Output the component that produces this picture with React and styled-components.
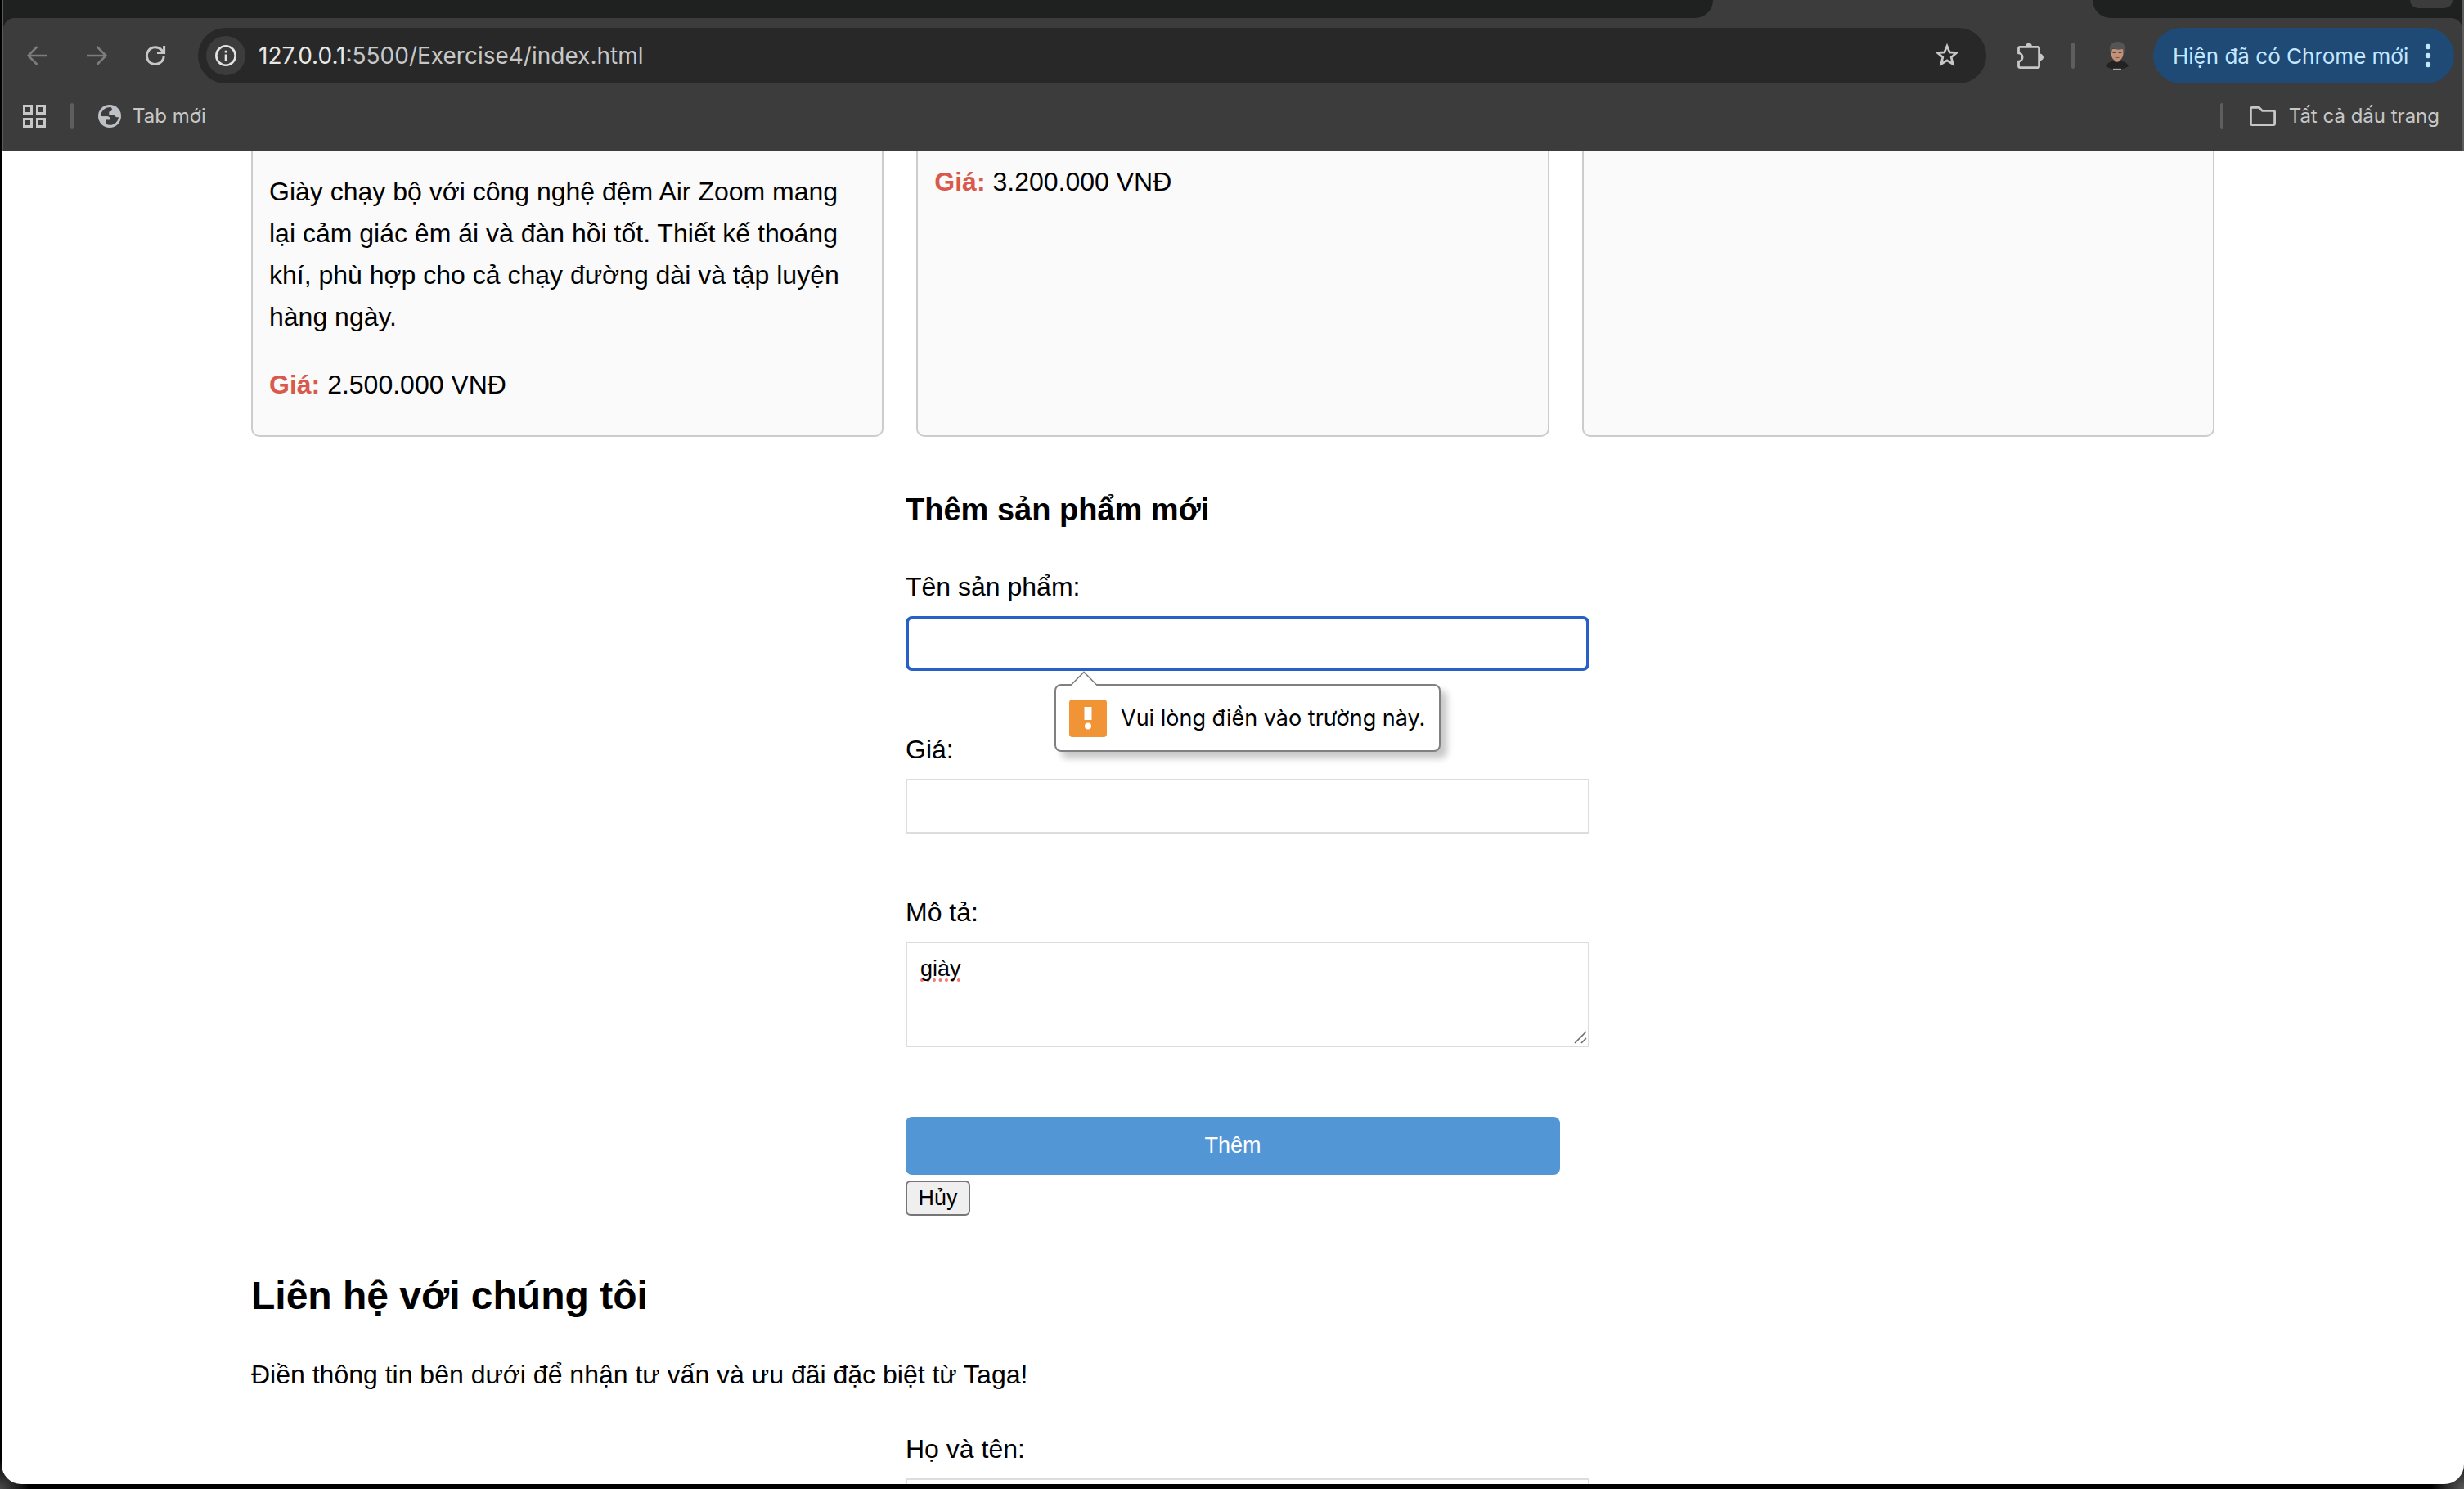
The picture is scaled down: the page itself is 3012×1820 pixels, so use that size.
import React from "react";
import styled, { createGlobalStyle, css } from "styled-components";

const GlobalStyle = createGlobalStyle`
  *, *::before, *::after { box-sizing: border-box; }
  body {
    margin: 0;
    background: #000;
    color: #000;
    font-family: "Liberation Sans", Arial, sans-serif;
  }
  h2, h3, p { margin: 0; }
  svg { display: block; }
`;

const uiFont = css`
  font-family: Inter, Roboto, sans-serif;
`;

/* ---------- Browser window ---------- */

const Window = styled.div`
  display: flex;
  flex-direction: column;
  height: 100vh;
  padding: 0 0 6px 2px;
  overflow: hidden;
  background:
    radial-gradient(circle at 0 100%, #4a4a4a 0, #000 36px) left bottom / 50% 40px no-repeat,
    radial-gradient(circle at 100% 100%, #5a5a5a 0, #000 40px) right bottom / 50% 40px no-repeat,
    #000;
`;

const Chrome = styled.header`
  ${uiFont}
  flex: none;
  background: #3c3c3c;
  border-left: 2px solid #5c5c5c;
  border-right: 2px solid #5c5c5c;
  color: #c7c7c7;
`;

const TabStrip = styled.div`
  display: flex;
  height: 22px;
`;

const StripLeft = styled.div`
  flex: 2090 1 0;
  background: #1f2120;
  border-bottom-right-radius: 22px;
`;

const ActiveTab = styled.div`
  flex: 464 1 0;
`;

const StripRight = styled.div`
  display: flex;
  justify-content: flex-end;
  flex: 452 1 0;
  background: #1f2120;
  border-bottom-left-radius: 22px;
`;

const TabSearch = styled.button`
  width: 52px;
  height: 10px;
  margin: 0 12px 0 0;
  padding: 0;
  border: 0;
  border-radius: 0 0 16px 16px;
  background: #3c3c3c;
`;

const ToolbarWrap = styled.div`
  background: #1f2120;
`;

const Toolbar = styled.div`
  display: flex;
  align-items: center;
  padding: 12px 10px 0 6px;
  border-radius: 14px 14px 0 0;
  background: #3c3c3c;
`;

const IconButton = styled.button`
  display: flex;
  align-items: center;
  justify-content: center;
  width: ${(p) => p.$width || 72}px;
  height: 48px;
  padding: 0;
  border: 0;
  background: none;
  color: ${(p) => (p.$dim ? "#7c7c7c" : "#c7c7c7")};
`;

const Omnibox = styled.div`
  display: flex;
  flex: 1;
  align-items: center;
  height: 68px;
  margin: 0 22px 0 16px;
  padding: 0 16px 0 10px;
  border-radius: 34px;
  background: #282828;
`;

const SiteInfo = styled.button`
  display: flex;
  align-items: center;
  justify-content: center;
  width: 48px;
  height: 48px;
  padding: 0;
  border: 0;
  border-radius: 50%;
  background: #3c3c3c;
  color: #e3e3e3;
`;

const Url = styled.div`
  flex: 1;
  padding-left: 16px;
  font-size: 28px;
  line-height: 36px;
`;

const Host = styled.span`
  color: #e8e8e8;
`;

const Divider = styled.span`
  width: 4px;
  height: 32px;
  border-radius: 2px;
  background: #5e5e5e;
`;

const UpdateButton = styled.button`
  ${uiFont}
  display: flex;
  align-items: center;
  justify-content: space-between;
  width: 368px;
  height: 68px;
  padding: 0 28px 0 24px;
  border: 0;
  border-radius: 34px;
  background: #1f4a75;
  color: #c2e7ff;
  font-size: 26px;
  white-space: nowrap;
`;

const Bookmarks = styled.nav`
  display: flex;
  align-items: center;
  height: 82px;
  padding: 0 28px 2px 24px;
`;

const Bookmark = styled.a`
  display: flex;
  align-items: center;
  gap: ${(p) => p.$gap || 16}px;
  color: #c7c7c7;
  font-size: 24px;
  line-height: 32px;
  text-decoration: none;
`;

const BookmarkGroup = styled.div`
  display: flex;
  align-items: center;
  gap: ${(p) => p.$gap || 30}px;
`;

const Spacer = styled.div`
  flex: 1;
`;

/* ---------- Page ---------- */

const Page = styled.main`
  flex: 1;
  min-height: 0;
  overflow: hidden;
  border-radius: 0 0 24px 24px;
  background: #fff;
  font-size: 32px;
  line-height: 51px;
`;

const Container = styled.div`
  max-width: 2400px;
  margin: 0 auto;
`;

const Products = styled.section`
  display: grid;
  grid-template-columns: repeat(3, 1fr);
  gap: 40px;
`;

const Card = styled.article`
  display: flex;
  flex-direction: column;
  gap: 32px;
  padding: ${(p) => p.$top || 0}px 20px 36px;
  border: 2px solid #ccc;
  border-top: 0;
  border-radius: 0 0 10px 10px;
  background: #fafafa;
`;

const PriceLabel = styled.strong`
  color: #d9594c;
`;

const Form = styled.form`
  max-width: 800px;
  margin: 0 auto;
`;

const FormTitle = styled.h3`
  margin: 59px 0 39px;
  font-size: 38px;
  line-height: 60px;
`;

const Field = styled.div`
  position: relative;
  width: calc(100% + 36px);
  margin-bottom: ${(p) => p.$after || 71}px;
`;

const Label = styled.label`
  display: block;
  margin-bottom: 10px;
`;

const control = css`
  display: block;
  width: 100%;
  padding: 16px;
  border: 2px solid #ddd;
  border-radius: 0;
  outline: 0;
  background: #fff;
  color: #000;
  font-family: "Liberation Sans", Arial, sans-serif;
  font-size: 27px;
  line-height: 31px;
`;

const TextInput = styled.input`
  ${control}
  height: 67px;
  ${(p) => p.$focused && "border: 4px solid #2860c8; border-radius: 8px;"}
`;

const TextArea = styled.textarea`
  ${control}
  height: 129px;
  resize: none;
  text-decoration: underline dotted #f0776c 4px;
  text-decoration-skip-ink: none;
  text-underline-offset: 3px;
`;

const Grip = styled.svg`
  position: absolute;
  right: 3px;
  bottom: 4px;
`;

const Bubble = styled.div`
  ${uiFont}
  position: absolute;
  z-index: 1;
  top: 144px;
  left: 182px;
  display: flex;
  align-items: center;
  gap: 17px;
  width: 472px;
  height: 83px;
  padding: 0 16px;
  border: 2px solid #808080;
  border-radius: 8px;
  background: #fff;
  box-shadow: 8px 8px 8px rgba(0, 0, 0, 0.22);
  font-size: 27px;
  line-height: 36px;
  white-space: nowrap;
`;

const BubbleArrow = styled.svg`
  position: absolute;
  top: -18px;
  left: 17px;
`;

const SubmitButton = styled.button`
  display: block;
  width: 100%;
  height: 71px;
  margin-bottom: 7px;
  padding: 0;
  border: 0;
  border-radius: 8px;
  background: #5296d6;
  color: #fff;
  font-family: inherit;
  font-size: 27px;
`;

const CancelButton = styled.button`
  display: block;
  width: 79px;
  height: 43px;
  padding: 0;
  border: 2px solid #767676;
  border-radius: 6px;
  background: #efefef;
  color: #000;
  font-family: inherit;
  font-size: 27px;
`;

const SectionTitle = styled.h2`
  margin: 59px 0 33px;
  font-size: 48px;
  line-height: 77px;
`;

const Lead = styled.p`
  margin-bottom: 40px;
`;

/* ---------- Icons ---------- */

const Arrow = ({ flip }) => (
  <svg width="26" height="26" viewBox="0 0 26 26" fill="none" stroke="currentColor" strokeWidth="2.6">
    <path d={flip ? "M1 13H24M13.5 2L24.5 13L13.5 24" : "M25 13H2M12.5 2L1.5 13L12.5 24"} />
  </svg>
);

const Reload = () => (
  <svg width="26" height="26" viewBox="0 0 26 26" fill="none" stroke="currentColor" strokeWidth="3">
    <path d="M23.2 14A10.4 10.4 0 1 1 20.6 6.2L23 9M23.6 1V9.4H15" />
  </svg>
);

const Info = () => (
  <svg width="28" height="28" viewBox="0 0 28 28" fill="none" stroke="currentColor" strokeWidth="2.6">
    <circle cx="14" cy="14" r="11.7" />
    <path d="M14 12.5V20M14 7.8V10.4" />
  </svg>
);

const Star = () => (
  <svg width="32" height="32" viewBox="0 0 32 32" fill="none" stroke="currentColor" strokeWidth="2.7">
    <path d="M16 4.2L19.2 11.9L27.6 12.6L21.2 18.1L23.2 26.3L16 21.9L8.8 26.3L10.8 18.1L4.4 12.6L12.8 11.9Z" />
  </svg>
);

const Puzzle = () => (
  <svg width="32" height="32" viewBox="0 0 32 32">
    <path
      d="M3.4 5.4H25Q26.6 5.4 26.6 7V29Q26.6 30.6 25 30.6H3.4Q1.5 30.6 1.5 29V23.2C7.6 22.6 7.6 13.4 1.5 12.8V7Q1.5 5.4 3.4 5.4Z"
      fill="none"
      stroke="currentColor"
      strokeWidth="2.8"
    />
    <path d="M10 5A4 4.6 0 0 1 18 5ZM27 13.6A5 4.4 0 0 1 27 22.4Z" fill="currentColor" />
  </svg>
);

const Avatar = () => (
  <svg width="30" height="36" viewBox="0 0 30 36">
    <path d="M1 31C3 26 9 25 12 24H18C22 25 27 26 29 31Q22 35 15 35T1 31Z" fill="#222" />
    <path d="M11.500 20H17.500V25Q15 27 11.500 25Z" fill="#a8745f" />
    <path d="M7.500 10H22.500V16Q22 23 15 25Q8 23 7.500 16Z" fill="#c2917c" />
    <path d="M6.500 14C4 5 9 1 16 1C24 1 25.500 7 23.500 14L21.500 10Q15 12 9.500 9L8 14Z" fill="#555" />
    <path d="M9.500 14H13.500M16.500 14H20.500" stroke="#3c2b26" strokeWidth="1.6" />
    <path d="M12.500 20.500H17.500" stroke="#8c5548" strokeWidth="1.2" />
    <path d="M10 34.500H20" stroke="#a5a5a5" strokeWidth="1.4" />
  </svg>
);

const Dots = () => (
  <svg width="8" height="30" viewBox="0 0 8 30" fill="currentColor">
    <circle cx="4" cy="4" r="3.2" />
    <circle cx="4" cy="15" r="3.2" />
    <circle cx="4" cy="26" r="3.2" />
  </svg>
);

const Apps = () => (
  <svg width="28" height="28" viewBox="0 0 28 28" fill="none" stroke="currentColor" strokeWidth="3">
    <path d="M1.5 1.5H10.5V10.5H1.5ZM17.500 1.500H26.500V10.500H17.500ZM1.500 17.500H10.500V26.500H1.500ZM17.500 17.500H26.500V26.500H17.500Z" />
  </svg>
);

const Globe = () => (
  <svg width="28" height="28" viewBox="0 0 28 28">
    <circle cx="14" cy="14" r="14" fill="#bdc1c6" />
    <path
      d="M16 3.200C11 2.400 5 5.500 3.200 12C2.800 13.600 3.200 14.300 5 14.300H10.500C13 14.300 15 16 14.800 18.300H10V23.800C16 27 24 22.500 25 15.200H22.500C21 15.200 20.600 13 19 13H13.300V8.600C15.500 8.600 17 7.600 17 5.600Z"
      fill="#3c3c3c"
    />
    <path d="M3 14.200H10.500C13 14.200 15 16 14.800 18.300H10V24.500C5.500 23 3 18.500 3 14.200Z" fill="#bdc1c6" />
  </svg>
);

const Folder = () => (
  <svg width="32" height="24" viewBox="0 0 32 24" fill="none" stroke="currentColor" strokeWidth="2.8">
    <path d="M3 1.400H11.500L15.500 5.400H29Q30.600 5.400 30.600 7V21Q30.600 22.600 29 22.600H3Q1.400 22.600 1.400 21V3Q1.400 1.400 3 1.400Z" />
  </svg>
);

const Warning = () => (
  <svg width="46" height="46" viewBox="0 0 46 46">
    <rect width="46" height="46" rx="4" fill="#f09436" />
    <path d="M18.500 9H27.500V25H18.500Z" fill="#fff" />
    <circle cx="23" cy="32.500" r="4" fill="#fff" />
  </svg>
);

/* ---------- App ---------- */

function BrowserChrome() {
  return (
    <Chrome>
      <TabStrip>
        <StripLeft />
        <ActiveTab />
        <StripRight>
          <TabSearch type="button" aria-label="Tìm kiếm thẻ" />
        </StripRight>
      </TabStrip>
      <ToolbarWrap>
        <Toolbar>
          <IconButton type="button" $dim aria-label="Quay lại"><Arrow /></IconButton>
          <IconButton type="button" $dim aria-label="Tiến"><Arrow flip /></IconButton>
          <IconButton type="button" aria-label="Tải lại"><Reload /></IconButton>
          <Omnibox>
            <SiteInfo type="button" aria-label="Thông tin trang web"><Info /></SiteInfo>
            <Url><Host>127.0.0.1</Host>:5500/Exercise4/index.html</Url>
            <IconButton type="button" $width={64} aria-label="Đánh dấu trang"><Star /></IconButton>
          </Omnibox>
          <IconButton type="button" $width={64} aria-label="Tiện ích"><Puzzle /></IconButton>
          <IconButton as="span" $width={40}><Divider /></IconButton>
          <IconButton type="button" $width={68} aria-label="Hồ sơ"><Avatar /></IconButton>
          <IconButton as="span" $width={10} />
          <UpdateButton type="button">
            Hiện đã có Chrome mới
            <Dots />
          </UpdateButton>
        </Toolbar>
      </ToolbarWrap>
      <Bookmarks>
        <BookmarkGroup>
          <Bookmark href="#apps" aria-label="Ứng dụng"><Apps /></Bookmark>
          <Divider />
          <Bookmark href="#new-tab" $gap={14}><Globe />Tab mới</Bookmark>
        </BookmarkGroup>
        <Spacer />
        <BookmarkGroup $gap={32}>
          <Divider />
          <Bookmark href="#bookmarks"><Folder />Tất cả dấu trang</Bookmark>
        </BookmarkGroup>
      </Bookmarks>
    </Chrome>
  );
}

export default function App() {
  return (
    <Window>
      <GlobalStyle />
      <BrowserChrome />
      <Page>
        <Container>
          <Products>
            <Card $top={25}>
              <p>
                Giày chạy bộ với công nghệ đệm Air Zoom mang lại cảm giác êm ái và đàn hồi tốt.
                Thiết kế thoáng khí, phù hợp cho cả chạy đường dài và tập luyện hàng ngày.
              </p>
              <p><PriceLabel>Giá:</PriceLabel> 2.500.000 VNĐ</p>
            </Card>
            <Card $top={13}>
              <p><PriceLabel>Giá:</PriceLabel> 3.200.000 VNĐ</p>
            </Card>
            <Card />
          </Products>

          <Form noValidate>
            <FormTitle>Thêm sản phẩm mới</FormTitle>
            <Field>
              <Label htmlFor="product-name">Tên sản phẩm:</Label>
              <TextInput id="product-name" type="text" $focused />
              <Bubble role="alert">
                <BubbleArrow width="34" height="20" viewBox="0 0 34 20">
                  <path d="M1 18L17 2L33 18V20H1Z" fill="#fff" />
                  <path d="M1 17.500L17 1.500L33 17.500" fill="none" stroke="#808080" strokeWidth="1.6" />
                </BubbleArrow>
                <Warning />
                Vui lòng điền vào trường này.
              </Bubble>
            </Field>
            <Field>
              <Label htmlFor="product-price">Giá:</Label>
              <TextInput id="product-price" type="text" />
            </Field>
            <Field $after={85}>
              <Label htmlFor="product-description">Mô tả:</Label>
              <TextArea id="product-description" spellCheck={false} defaultValue="giày" />
              <Grip width="16" height="16" viewBox="0 0 16 16" stroke="#6b6b6b" strokeWidth="1.6">
                <path d="M1 15L15 1M9 15L15 9" />
              </Grip>
            </Field>
            <SubmitButton type="submit">Thêm</SubmitButton>
            <CancelButton type="button">Hủy</CancelButton>
          </Form>

          <SectionTitle>Liên hệ với chúng tôi</SectionTitle>
          <Lead>Điền thông tin bên dưới để nhận tư vấn và ưu đãi đặc biệt từ Taga!</Lead>
          <Form>
            <Field>
              <Label htmlFor="contact-name">Họ và tên:</Label>
              <TextInput id="contact-name" type="text" />
            </Field>
          </Form>
        </Container>
      </Page>
    </Window>
  );
}
